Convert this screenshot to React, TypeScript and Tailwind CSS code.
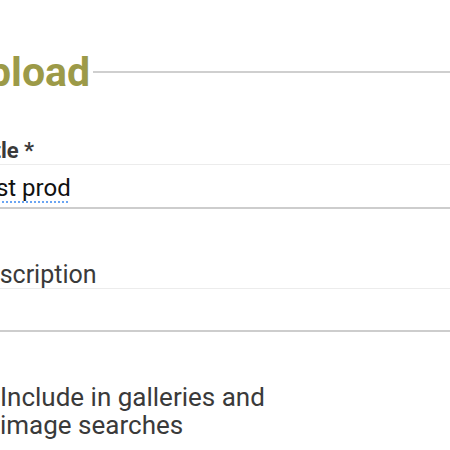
export default function App() {
  return (
    <div className="h-[450px] w-[450px] overflow-hidden bg-white font-['Roboto',sans-serif]">
      <div className="-ml-[30px] w-[520px]">
        {/* Section heading */}
        <h2 className="-ml-[9px] mt-[48px] flex h-[48px] items-center text-[41px] font-bold leading-[48px] text-[#9c9a48]">
          <span>Upload</span>
          <span className="ml-[3px] h-[2px] flex-1 bg-[#cfcfcf]" />
        </h2>

        {/* Title */}
        <label className="ml-[4px] mt-[42px] block text-[22px] font-bold leading-[26px] text-[#3a3a3a]">
          Title *
        </label>
        <div className="h-[45px] border-t border-b-2 border-t-[#ececec] border-b-[#cdcdcd] pt-[9px]">
          <span className="text-[24px] leading-[28px] text-[#111] underline decoration-[#6aa5f3] decoration-dotted decoration-2 underline-offset-[5px]">
            Test prod
          </span>
        </div>

        {/* Description */}
        <label className="mt-[53px] block text-[25px] leading-[26px] text-[#3a3a3a]">
          Description
        </label>
        <div className="h-[44px] border-t border-b-2 border-t-[#ececec] border-b-[#cdcdcd]" />

        {/* Visibility */}
        <div className="mt-[51px] flex items-start gap-[10px]">
          <span className="mt-[4px] h-[20px] w-[20px] shrink-0 rounded-[4px] border border-[#aaa] bg-white" />
          <span className="text-[26px] leading-[28px] text-[#3a3a3a]">
            Include in galleries and
            <br />
            image searches
          </span>
        </div>
      </div>
    </div>
  );
}
